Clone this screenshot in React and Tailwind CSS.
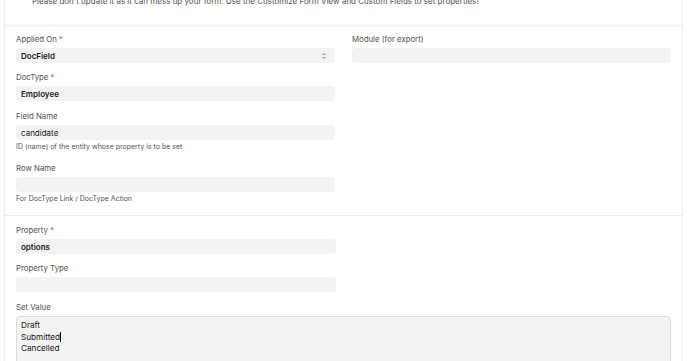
export default function App() {
  const Label = ({ children, req }) => (
    <div className="h-[12px] mb-[3px] text-[7.8px] leading-[12px] text-[#525252]">
      {children}
      {req && <span className="text-[#e24c4c]"> *</span>}
    </div>
  );

  const Input = ({ value, bold, select }) => (
    <div className="h-[15px] rounded-[4px] bg-[#f3f3f3] flex items-center px-[5px] text-[8px] text-[#171717]">
      <span className={bold ? "font-semibold" : ""}>{value}</span>
      {select && (
        <svg className="ml-auto mr-[3px]" width="6" height="8" viewBox="0 0 6 8" fill="none">
          <path d="M1.5 3L3 1.5L4.5 3" stroke="#555" strokeWidth="0.8" />
          <path d="M1.5 5L3 6.5L4.5 5" stroke="#555" strokeWidth="0.8" />
        </svg>
      )}
    </div>
  );

  const Help = ({ children }) => (
    <div className="mt-[1px] h-[12px] text-[7px] leading-[12px] text-[#525252]">{children}</div>
  );

  return (
    <div className="w-[690px] h-[361px] overflow-hidden bg-white" style={{ fontFamily: "Inter, 'Noto Sans', sans-serif" }}>
      <div className="ml-[4px] w-[679px] border-x border-[#ededed]">
        {/* NOTICE */}
        <div className="h-[25px] overflow-hidden pl-[27px]">
          <p className="-mt-[5px] text-[8px] leading-[12px] text-[#525252] whitespace-nowrap">
            Please don't update it as it can mess up your form. Use the Customize Form View and Custom Fields to set properties!
          </p>
        </div>

        {/* SECTION 1 */}
        <div className="border-t border-[#ededed] px-[11px] pt-[7px] pb-[10px] grid grid-cols-2 gap-x-[17px]">
          <div>
            <Label req>Applied On</Label>
            <Input value="DocField" bold select />
            <div className="mt-[8px]">
              <Label req>DocType</Label>
              <Input value="Employee" bold />
            </div>
            <div className="mt-[9px]">
              <Label>Field Name</Label>
              <Input value="candidate" />
              <Help>ID (name) of the entity whose property is to be set</Help>
            </div>
            <div className="mt-[9px]">
              <Label>Row Name</Label>
              <Input value="" />
              <Help>For DocType Link / DocType Action</Help>
            </div>
          </div>
          <div>
            <Label>Module (for export)</Label>
            <Input value="" />
          </div>
        </div>

        {/* SECTION 2 */}
        <div className="border-t border-[#ededed] px-[11px] pt-[8px]">
          <div className="w-[320px]">
            <Label req>Property</Label>
            <Input value="options" bold />
            <div className="mt-[8px]">
              <Label>Property Type</Label>
              <Input value="" />
            </div>
          </div>
          <div className="mt-[9px]">
            <Label>Set Value</Label>
            <div className="h-[80px] rounded-[4px] border border-[#dcdcdc] bg-[#f3f3f3] px-[4px] pt-[3px] text-[8.2px] leading-[11.5px] text-[#171717]">
              <div>Draft</div>
              <div>
                Submitted<span className="inline-block w-[1px] h-[10px] bg-black align-middle"></span>
              </div>
              <div>Cancelled</div>
            </div>
          </div>
        </div>
      </div>
    </div>
  );
}
